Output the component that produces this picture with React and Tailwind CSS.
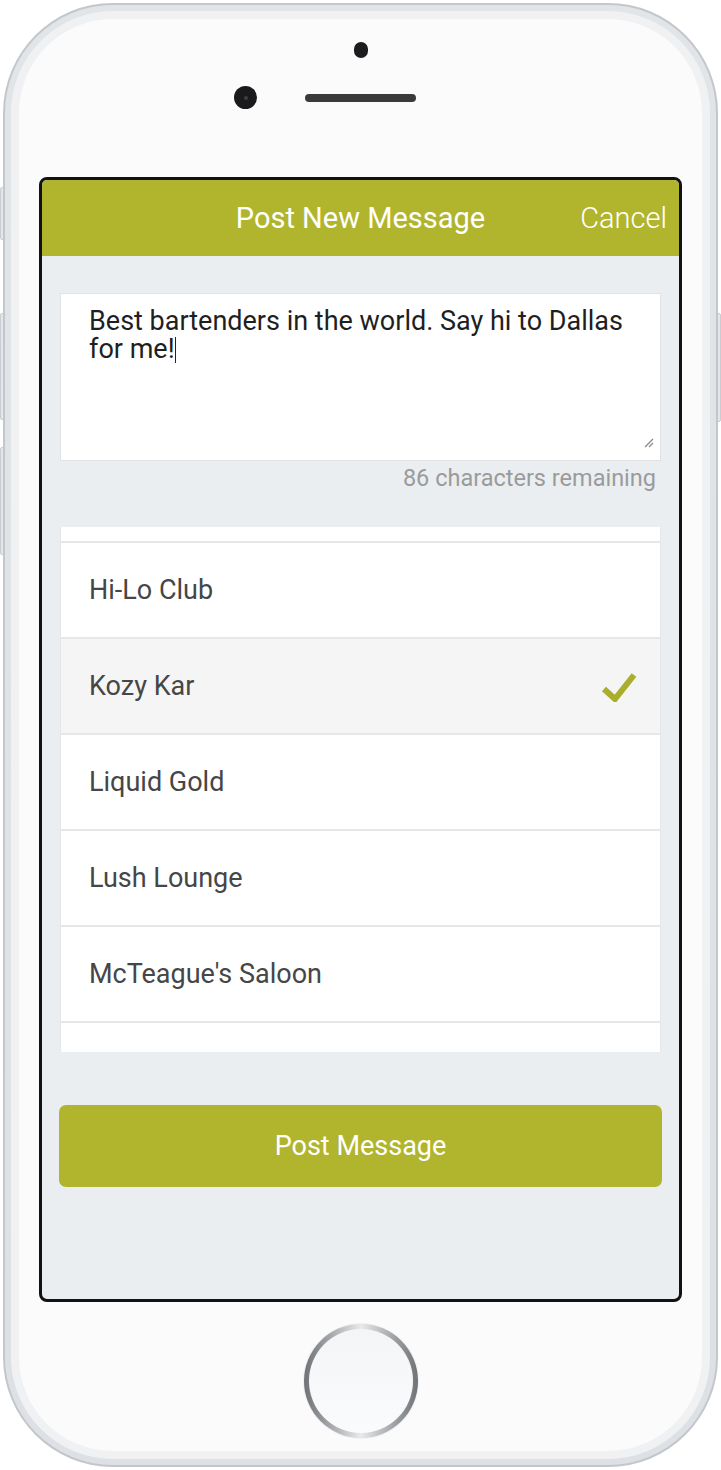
import React from "react";

const rows = [
  { name: "Hi-Lo Club" },
  { name: "Kozy Kar", selected: true },
  { name: "Liquid Gold" },
  { name: "Lush Lounge" },
  { name: "McTeague's Saloon" },
];

function Check() {
  return (
    <svg width="36" height="32" viewBox="0 0 36 32" fill="none">
      <polyline
        points="3,19 14,29 33,5"
        stroke="#a9ae2b"
        strokeWidth="6"
        strokeLinejoin="miter"
        fill="none"
      />
    </svg>
  );
}

export default function App() {
  return (
    <div className="w-[721px] h-[1470px] bg-white" style={{ fontFamily: "Roboto, 'Noto Sans', sans-serif" }}>
      <div className="relative ml-[3px] mt-[3px] w-[715px] h-[1464px]">
        {/* side buttons */}
        <div className="absolute left-[-3px] top-[184px] w-[6px] h-[53px] rounded-l-[2px] bg-[#e4e6e9] border border-[#c9cdd1]" />
        <div className="absolute left-[-3px] top-[310px] w-[6px] h-[107px] rounded-l-[2px] bg-[#e4e6e9] border border-[#c9cdd1]" />
        <div className="absolute left-[-3px] top-[444px] w-[6px] h-[108px] rounded-l-[2px] bg-[#e4e6e9] border border-[#c9cdd1]" />
        <div className="absolute right-[-3px] top-[310px] w-[6px] h-[109px] rounded-r-[2px] bg-[#e4e6e9] border border-[#c9cdd1]" />

        <div className="relative h-full rounded-[110px] bg-[#c3c7cb] p-[2px]">
          <div className="h-full rounded-[108px] bg-gradient-to-b from-[#e2e5e8] to-[#dde0e4] p-[6px]">
            <div className="h-full rounded-[102px] bg-[#f0f1f3] p-[8px]">
              <div className="h-full rounded-[94px] bg-[#fbfbfc] flex flex-col px-[20px]">
                {/* top section */}
                <div className="h-[158px] flex flex-col items-center">
                  <div className="mt-[23px] w-[14px] h-[16px] rounded-full bg-[#1c1c1e]" />
                  <div className="mt-[28px] w-full grid grid-cols-[1fr_auto_1fr] items-center">
                    <div className="flex justify-end pr-[48px]">
                      <div className="w-[23px] h-[23px] rounded-full bg-[#1a1a1c] flex items-center justify-center">
                        <div className="w-[4px] h-[4px] rounded-full bg-[#3a3d44]" />
                      </div>
                    </div>
                    <div className="w-[111px] h-[8px] rounded-full bg-[#3a3a3c]" />
                    <div />
                  </div>
                </div>

                {/* screen */}
                <div className="h-[1125px] border-[3px] border-[#121212] rounded-[8px] overflow-hidden flex flex-col bg-[#ebeef0]">
                  <div className="h-[76px] shrink-0 bg-[#b1b52e] grid grid-cols-[1fr_auto_1fr] items-center">
                    <div />
                    <div className="text-[29px] text-white leading-none">Post New Message</div>
                    <div className="flex justify-end pr-[12px]">
                      <span className="text-[29px] text-white font-light leading-none">Cancel</span>
                    </div>
                  </div>

                  <div className="flex flex-col px-[18px] pt-[37px]">
                    <div className="relative h-[168px] bg-white border border-[#e0e2e3] pl-[28px] pr-[20px] pt-[13px]">
                      <p className="text-[27px] leading-[28px] text-[#1f1f1f]">
                        Best bartenders in the world. Say hi to Dallas for me!
                        <span className="inline-block w-[1px] h-[26px] bg-[#222] align-[-5px]" />
                      </p>
                      <svg className="absolute right-[6px] bottom-[12px]" width="10" height="10" viewBox="0 0 10 10">
                        <line x1="9" y1="1" x2="1" y2="9" stroke="#8a8a8a" strokeWidth="1.2" />
                        <line x1="9" y1="5" x2="5" y2="9" stroke="#8a8a8a" strokeWidth="1.2" />
                      </svg>
                    </div>
                    <div className="mt-[4px] h-[26px] pr-[5px] text-right text-[23.5px] leading-[26px] text-[#999b9c]">
                      86 characters remaining
                    </div>

                    <div className="mt-[36px] h-[525px] bg-white border-x border-[#e4e6e7] flex flex-col overflow-hidden">
                      <div className="h-[14px] shrink-0" />
                      {rows.map((r) => (
                        <div
                          key={r.name}
                          className={`h-[96px] shrink-0 border-t-2 border-[#e6e7e8] flex items-center justify-between pl-[28px] pr-[23px] ${
                            r.selected ? "bg-[#f5f5f5]" : "bg-white"
                          }`}
                        >
                          <span className="text-[27px] text-[#464646]">{r.name}</span>
                          {r.selected && <Check />}
                        </div>
                      ))}
                      <div className="h-[31px] shrink-0 border-t-2 border-[#e6e7e8]" />
                    </div>

                    <div className="mt-[53px] -mx-[1px] h-[82px] rounded-[7px] bg-[#b1b52e] flex items-center justify-center">
                      <span className="text-[27px] text-white">Post Message</span>
                    </div>
                  </div>
                </div>

                {/* bottom section */}
                <div className="flex-1 flex justify-center pt-[21px]">
                  <div className="w-[116px] h-[116px] rounded-full bg-[#eef0f2] p-[1px]">
                    <div className="w-full h-full rounded-full bg-gradient-to-r from-[#6f7276] via-[#e9eaec] to-[#6f7276] p-[5px]">
                      <div className="w-full h-full rounded-full bg-gradient-to-b from-[#f4f5f7] to-[#fafbfc]" />
                    </div>
                  </div>
                </div>
              </div>
            </div>
          </div>
        </div>
      </div>
    </div>
  );
}
